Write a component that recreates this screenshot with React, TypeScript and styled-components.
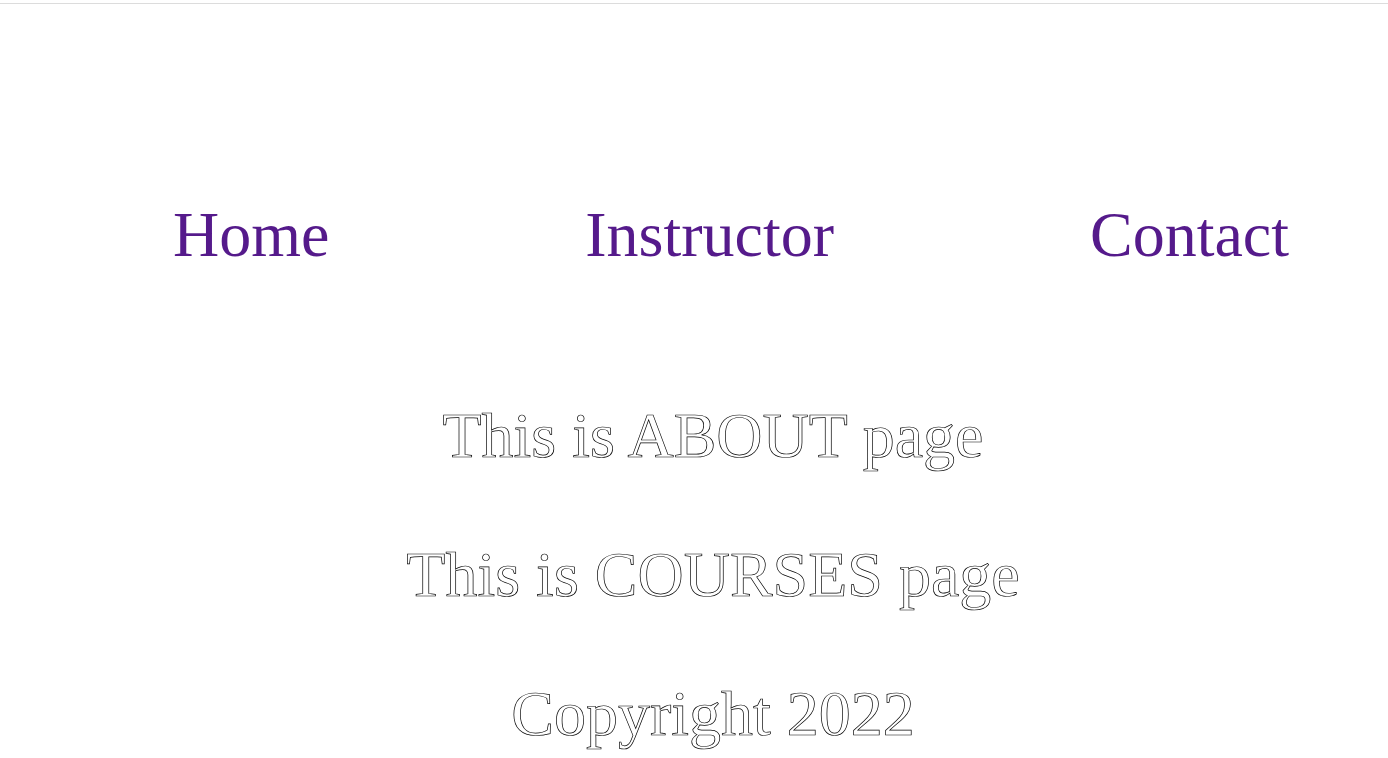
import React from 'react';
import styled, { createGlobalStyle } from 'styled-components';

const GlobalStyle = createGlobalStyle`
  html, body {
    margin: 0;
    background: #ffffff;
    overflow-x: hidden;
  }
  body {
    font-family: "Liberation Serif", "Times New Roman", serif;
    font-variant-ligatures: none;
    font-feature-settings: "liga" 0, "clig" 0, "dlig" 0, "calt" 0;
  }
`;

const TopRule = styled.div`
  height: 3px;
  border-bottom: 1px solid #dcdcdc;
`;

const Page = styled.div`
  padding: 0 8px;
  overflow: hidden;
`;

const NavList = styled.ul`
  display: flex;
  justify-content: space-around;
  list-style: none;
  box-sizing: content-box;
  width: 100%;
  margin: 194px 0 0;
  padding: 0 0 0 37px;
  font-size: 64px;
`;

const NavItem = styled.li`
  line-height: normal;
`;

const NavLink = styled.a`
  color: #551a8b;
  text-decoration: none;
`;

const Main = styled.main`
  padding-left: 38px;
  margin-top: 127px;
`;

const Outline = styled.p`
  margin: 0 0 65px;
  font-size: 64px;
  text-align: center;
  color: #ffffff;
  -webkit-text-stroke: 0.7px #000000;
  font-variant-ligatures: none;
  font-feature-settings: "liga" 0, "clig" 0, "dlig" 0, "calt" 0;
`;

const links = ['Home', 'Instructor', 'Contact'];
const sections = ['This is ABOUT page', 'This is COURSES page', 'Copyright 2022'];

export default function App() {
  return (
    <>
      <GlobalStyle />
      <TopRule />
      <Page>
        <nav>
          <NavList>
            {links.map((l) => (
              <NavItem key={l}>
                <NavLink href="#">{l}</NavLink>
              </NavItem>
            ))}
          </NavList>
        </nav>
        <Main>
          {sections.map((s) => (
            <Outline key={s}>{s}</Outline>
          ))}
        </Main>
      </Page>
    </>
  );
}
